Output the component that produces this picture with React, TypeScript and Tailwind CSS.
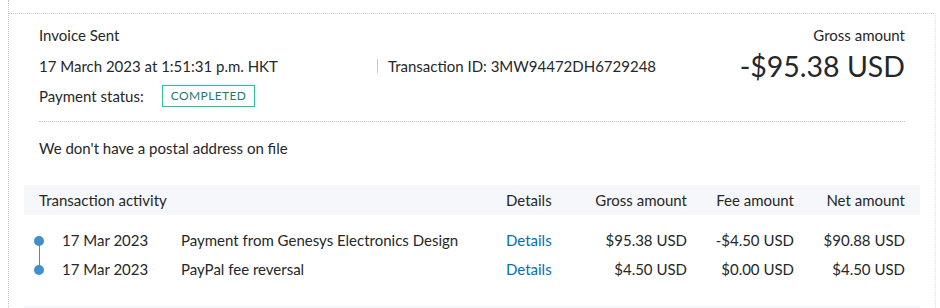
import React from 'react';

type Activity = {
    date: string;
    description: string;
    gross: string;
    fee: string;
    net: string;
};

const activity: Activity[] = [
    { date: '17 Mar 2023', description: 'Payment from Genesys Electronics Design', gross: '$95.38 USD', fee: '-$4.50 USD', net: '$90.88 USD' },
    { date: '17 Mar 2023', description: 'PayPal fee reversal', gross: '$4.50 USD', fee: '$0.00 USD', net: '$4.50 USD' },
];

const gridCols = 'grid grid-cols-[38px_119px_325px_81px_100px_107px_111px]';

const App = () => {
    return (
        <div className="w-[940px] h-[308px] overflow-hidden bg-white font-['Lato',sans-serif] text-[15px] text-[#25272a]">
            <div className="ml-[8px] h-full border-l border-dotted border-[#c8c8c8] pt-[13px]">
                <div className="w-[927px] h-full border-t border-dotted border-[#c4c4c4] border-r border-r-solid border-r-[#e4e4e4]">
                    {/* Summary */}
                    <div className="px-[30px] pt-[6px]">
                        <div className="flex">
                            <div className="flex-1">
                                <div className="h-[30px] flex items-center">Invoice Sent</div>
                                <div className="h-[31px] flex items-center pt-[1px]">
                                    <span className="w-[338px]">17 March 2023 at 1:51:31 p.m. HKT</span>
                                    <span className="h-[14px] border-l border-[#c8c8c8] mr-[10px]" />
                                    <span>Transaction ID: 3MW94472DH6729248</span>
                                </div>
                                <div className="h-[30px] flex items-center">
                                    <span>Payment status:</span>
                                    <span className="ml-[18px] h-[22px] px-[8px] flex items-center border border-[#2ac892] text-[#1f7a70] text-[12px] tracking-[0.4px]">
                                        COMPLETED
                                    </span>
                                </div>
                            </div>
                            <div className="text-right">
                                <div className="h-[30px] flex items-center justify-end">Gross amount</div>
                                <div className="h-[31px] flex items-center justify-end text-[28.5px] pt-[1px]">-$95.38 USD</div>
                            </div>
                        </div>
                        <div className="mt-[10px] border-t border-dotted border-[#c4c4c4]" />
                        <div className="mt-[11px] h-[30px] flex items-center">We don't have a postal address on file</div>
                    </div>

                    {/* Transaction activity */}
                    <div className="mx-[15px] mt-[22px]">
                        <div className={`${gridCols} h-[30px] items-center bg-[#f5f7fa]`}>
                            <div className="col-span-3 pl-[15px]">Transaction activity</div>
                            <div>Details</div>
                            <div className="text-right">Gross amount</div>
                            <div className="text-right">Fee amount</div>
                            <div className="text-right">Net amount</div>
                        </div>
                        <div className="pt-[11px]">
                            {activity.map((row, i) => (
                                <div key={i} className={`${gridCols} h-[29px] items-center`}>
                                    <div className="relative h-full flex items-center">
                                        <span className="ml-[10px] w-[10px] h-[10px] rounded-full bg-[#3f8fcf]" />
                                        {i < activity.length - 1 && (
                                            <span className="absolute left-[14.5px] top-[14px] w-[1px] h-[29px] bg-[#3f8fcf]" />
                                        )}
                                    </div>
                                    <div>{row.date}</div>
                                    <div>{row.description}</div>
                                    <div className="text-[#0070ba]">Details</div>
                                    <div className="text-right">{row.gross}</div>
                                    <div className="text-right">{row.fee}</div>
                                    <div className="text-right">{row.net}</div>
                                </div>
                            ))}
                        </div>
                        <div className="mt-[22px] h-[10px] bg-[#f5f7fa]" />
                    </div>
                </div>
            </div>
        </div>
    );
};

export default App;
